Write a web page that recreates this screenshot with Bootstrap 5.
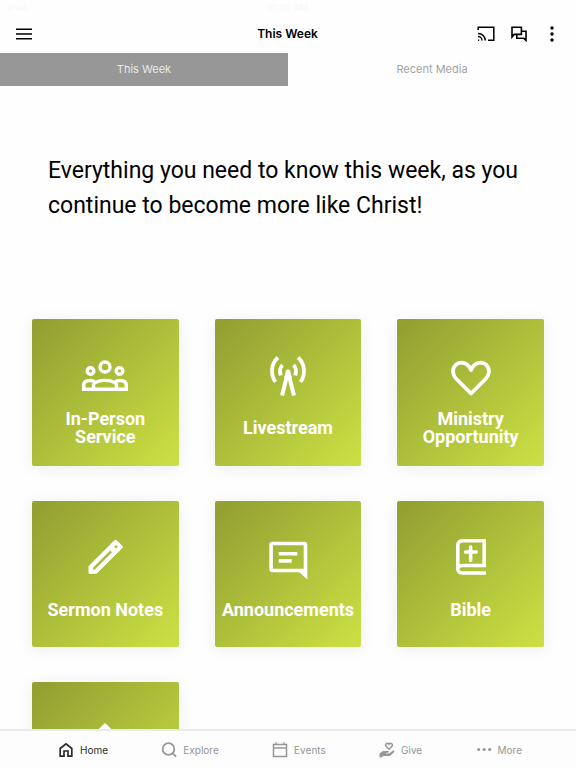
<!DOCTYPE html>
<html lang="en">
<head>
<meta charset="utf-8">
<meta name="viewport" content="width=device-width, initial-scale=1">
<title>This Week</title>
<link href="https://cdn.jsdelivr.net/npm/bootstrap@5.3.0/dist/css/bootstrap.min.css" rel="stylesheet">
<style>
body { font-family: Inter, "Liberation Sans", sans-serif; background: #fefefe; color: #000; }
svg { display: block; flex: none; fill: none; stroke: currentColor; }
.status { height: 16px; font-size: 9px; line-height: 16px; color: #f8f8f8; }
.topbar { height: 37px; padding: 0 17px 2px 16px; }
.topbar h1 { font-size: 12px; line-height: 20px; font-weight: 600; }
.side { flex: 1 1 0; }
.tabs a { height: 33px; font-size: 11px; line-height: 33px; color: #a3a3a3; }
.tabs a.active { background: #979797; color: #e9e9e9; }
.intro { font: 400 23px/35px Roboto, sans-serif; padding: 67px 48px 96px; }
.tiles { display: grid; grid-template-columns: repeat(3, minmax(0, 1fr)); gap: 35px 36px; padding: 0 32px 80px; }
.tile { aspect-ratio: 1; border-radius: 2px; color: #fff; font: 700 18px/18px Roboto, sans-serif;
  background: linear-gradient(135deg, #93a132 5%, #c9de43 95%); box-shadow: 0 2px 16px rgba(0,0,0,.07); }
.tile:hover { color: #fff; }
.tile svg { margin-top: 34px; width: 48px; height: 48px; }
.caption { height: 54px; }
.bottombar { height: 39px; background: #fdfdfd; border-top: 2px solid #eaeaea; padding: 0 54px 0 58px; }
.bottombar a { font-size: 10px; line-height: 16px; color: #969696; gap: 6px; }
.bottombar a.active { color: #2b2b2b; }
.bottombar svg { width: 16px; height: 16px; }
</style>
<script src="https://cdn.jsdelivr.net/npm/bootstrap@5.3.0/dist/js/bootstrap.bundle.min.js"></script>
</head>
<body>
<header>
  <div class="status d-flex px-2"><span class="side">iPad</span><span>10:00 AM</span><span class="side"></span></div>
  <div class="topbar d-flex align-items-center">
    <div class="side d-flex">
      <button class="btn p-0 border-0 text-black" type="button" aria-label="Menu">
        <svg width="16" height="12" viewBox="0 0 16 12" stroke-width="1.5"><path d="M0 1.3h16M0 6h16M0 10.7h16"/></svg>
      </button>
    </div>
    <h1 class="m-0">This Week</h1>
    <div class="side d-flex justify-content-end align-items-center">
      <button class="btn p-0 border-0 text-black" type="button" aria-label="Cast">
        <svg width="18" height="16" viewBox="0 0 18 16" stroke-width="1.5"><path d="M1.2 4V1.2h15.6v13H11M1 14.2h1.2M1 10.6a4 4 0 0 1 4 4M1 7.4a7 7 0 0 1 7.200 7.200"/></svg>
      </button>
      <button class="btn p-0 border-0 text-black ms-3" type="button" aria-label="Messages">
        <svg width="16" height="16" viewBox="0 0 16 16" stroke-width="1.6"><path d="M1 11V1.200h9.400v7.200H3.200zM10.400 5.200H15v9.200l-2.200-2.100H5.800V8.400"/></svg>
      </button>
      <button class="btn p-0 border-0 text-black ms-3" type="button" aria-label="Options">
        <svg width="16" height="16" viewBox="0 0 16 16"><g fill="currentColor" stroke="none"><circle cx="9" cy="2" r="1.700"/><circle cx="9" cy="8" r="1.700"/><circle cx="9" cy="14" r="1.700"/></g></svg>
      </button>
    </div>
  </div>
  <nav class="tabs d-flex text-center" aria-label="Sections">
    <a class="active w-50 text-decoration-none" href="#week" aria-current="page">This Week</a>
    <a class="w-50 text-decoration-none" href="#media">Recent Media</a>
  </nav>
</header>
<main id="week">
  <p class="intro m-0">Everything you need to know this week, as you continue to become more like Christ!</p>
  <div class="tiles">
    <a class="tile d-flex flex-column align-items-center text-center text-decoration-none" href="#service">
      <svg viewBox="0 0 48 48" stroke-width="3.400"><circle cx="24" cy="14" r="5"/><circle cx="9.500" cy="18" r="3.300"/><circle cx="38.500" cy="18" r="3.300"/><path d="M12.500 36.300V32c0-2.500 5.500-4.600 11.500-4.600S35.500 29.500 35.500 32v4.300M2.700 36.300V32c0-4.500 5.500-5.500 11-3.500M45.300 36.300V32c0-4.500-5.500-5.500-11-3.500M1 36.300h46"/></svg>
      <span class="caption d-flex align-items-center">In-Person<br>Service</span>
    </a>
    <a class="tile d-flex flex-column align-items-center text-center text-decoration-none" href="#live">
      <svg viewBox="0 0 48 48"><path d="M14 4.500C6.500 11 6.500 22 11.500 29M34 4.500C41.500 11 41.500 22 36.500 29M18.500 12c-2.700 2.700-3 6.700-1.700 10.500M29.500 12c2.700 2.700 3 6.700 1.700 10.500" stroke-width="3.800"/><path d="M18 42.500 24 19l6 23.500" stroke-width="4"/><path d="M22 17.500q2-2.500 4 0l2 7.500h-8z" fill="currentColor" stroke="none"/></svg>
      <span class="caption d-flex align-items-center">Livestream</span>
    </a>
    <a class="tile d-flex flex-column align-items-center text-center text-decoration-none" href="#ministry">
      <svg viewBox="0 0 48 48" stroke-width="3.800" stroke-linejoin="round"><path d="M24 40.500 9 25.500C5.500 22 5 16 8.200 12.500 12 8 20.500 8.200 24 17 27.500 8.200 36 8 39.800 12.500 43 16 42.500 22 39 25.500z"/></svg>
      <span class="caption d-flex align-items-center">Ministry<br>Opportunity</span>
    </a>
    <a class="tile d-flex flex-column align-items-center text-center text-decoration-none" href="#notes">
      <svg viewBox="0 0 48 48" stroke="none"><path fill="currentColor" fill-rule="evenodd" d="M8 38.300v-7L33.500 5.800q1.200-1.200 2.400 0l5 5q1.200 1.200 0 2.400L15.500 38.300zM11.500 35h2.200L31.500 17.200l-2.200-2.200L11.500 32.800zM35 9.500l-2.200 2.200L35 13.900l2.200-2.200z"/></svg>
      <span class="caption d-flex align-items-center">Sermon Notes</span>
    </a>
    <a class="tile d-flex flex-column align-items-center text-center text-decoration-none" href="#announcements">
      <svg viewBox="0 0 48 48" stroke-width="3.600"><rect x="7.100" y="8.500" width="34.400" height="27" rx="1.500"/><path d="M34.500 36.500 43.300 34v10.500z" fill="currentColor" stroke="none"/><path d="M14.700 18.700h18.600M14.700 25.900h13"/></svg>
      <span class="caption d-flex align-items-center">Announcements</span>
    </a>
    <a class="tile d-flex flex-column align-items-center text-center text-decoration-none" href="#bible">
      <svg viewBox="0 0 48 48" stroke-width="3.600"><path d="M39 38H16c-7 0-7-7.500 0-7.500h21.200V5.800H16c-3.500 0-5.200 2-5.200 5V34"/><path d="M23.600 12v13.500M18.500 17h10.800" stroke-linecap="round"/></svg>
      <span class="caption d-flex align-items-center">Bible</span>
    </a>
    <a class="tile d-flex flex-column align-items-center text-center text-decoration-none" href="#home" aria-label="Home campus">
      <svg viewBox="0 0 48 48"><path d="M24 7 4 26h6v16h28V26h6z" fill="currentColor" stroke="none"/></svg>
    </a>
  </div>
</main>
<nav class="bottombar fixed-bottom d-flex justify-content-between" aria-label="Main">
  <a class="active d-flex align-items-center text-decoration-none" href="#" aria-current="page"><svg viewBox="0 0 16 16" stroke-width="1.700"><path d="M2.200 14.200V6.500L8 1.800l5.800 4.700v7.700H10V9H6v5.200z"/></svg>Home</a>
  <a class="d-flex align-items-center text-decoration-none" href="#explore"><svg viewBox="0 0 16 16" stroke-width="1.800"><circle cx="7.500" cy="7" r="5.800"/><path d="m11.500 11 3.500 3.700"/></svg>Explore</a>
  <a class="d-flex align-items-center text-decoration-none" href="#events"><svg viewBox="0 0 16 16" stroke-width="1.500"><path d="M1.500 2.500h13v12h-13zM1.500 6h13M4 .5v2M12 .5v2"/></svg>Events</a>
  <a class="d-flex align-items-center text-decoration-none" href="#give"><svg viewBox="0 0 16 16"><path d="M10 7.200 7 4.200C5.700 2 8.700.2 10 2.300c1.300-2.100 4.300-.3 3 1.900z" stroke-width="1.400"/><path d="M.5 11.500 4 9h5c1.200 0 1.200 1.500 0 1.700H7v.8h3.200L14 8.600c1-.6 2 .5 1.200 1.300L11 14H4.500L2 15.500H.5z" fill="currentColor" stroke="none"/></svg>Give</a>
  <a class="d-flex align-items-center text-decoration-none" href="#more"><svg viewBox="0 0 16 16"><g fill="currentColor" stroke="none"><circle cx="2.700" cy="7.500" r="1.600"/><circle cx="8.200" cy="7.500" r="1.600"/><circle cx="13.700" cy="7.500" r="1.600"/></g></svg>More</a>
</nav>
</body>
</html>
